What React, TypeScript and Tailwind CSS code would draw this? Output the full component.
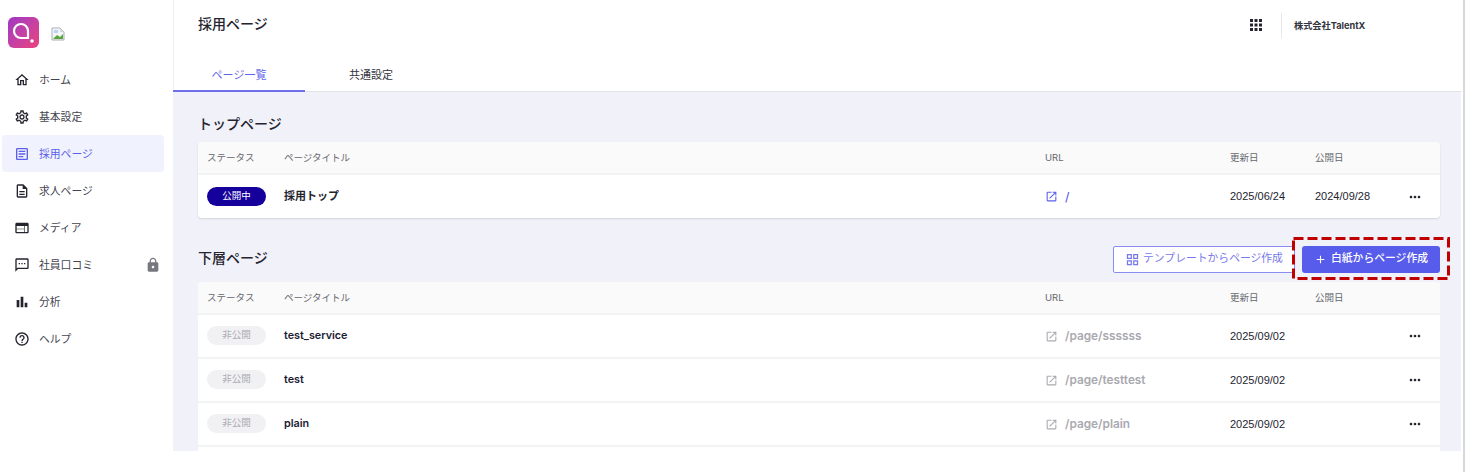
import type { ReactNode } from 'react'
import {
  MdAdd,
  MdApps,
  MdBarChart,
  MdHelpOutline,
  MdLock,
  MdMoreHoriz,
  MdOpenInNew,
  MdOutlineArticle,
  MdOutlineDescription,
  MdOutlineGridView,
  MdOutlineHome,
  MdOutlineSettings,
  MdOutlineSms,
  MdWeb,
} from 'react-icons/md'

const navItems = [
  { label: 'ホーム', icon: <MdOutlineHome size={16} /> },
  { label: '基本設定', icon: <MdOutlineSettings size={16} /> },
  { label: '採用ページ', icon: <MdOutlineArticle size={16} />, active: true },
  { label: '求人ページ', icon: <MdOutlineDescription size={16} /> },
  { label: 'メディア', icon: <MdWeb size={16} /> },
  { label: '社員口コミ', icon: <MdOutlineSms size={16} />, locked: true },
  { label: '分析', icon: <MdBarChart size={16} /> },
  { label: 'ヘルプ', icon: <MdHelpOutline size={16} /> },
]

const drafts = [
  { title: 'test_service', url: '/page/ssssss', updated: '2025/09/02' },
  { title: 'test', url: '/page/testtest', updated: '2025/09/02' },
  { title: 'plain', url: '/page/plain', updated: '2025/09/02' },
]

const dateFont = "font-['Liberation_Sans',sans-serif]"

function Logo() {
  return (
    <div className="w-[31px] h-[31px] rounded-[6px] bg-gradient-to-br from-[#a034c4] to-[#ec3f7c] flex items-center justify-center">
      <svg width="31" height="31" viewBox="0 0 31 31" fill="none">
        <path d="M13 7a7 7 0 0 0 0 14h7v-7a7 7 0 0 0-7-7z" stroke="white" strokeWidth="2.2" />
        <circle cx="24" cy="24" r="1.8" fill="white" />
      </svg>
    </div>
  )
}

function BrokenImage() {
  return (
    <svg width="14" height="14" viewBox="0 0 14 14">
      <path d="M1 1h8l4 4v8H1z" fill="#f4f6f8" stroke="#a9aeb3" />
      <path d="M9 1v4h4z" fill="#d5d8dc" />
      <path d="M2 12l4-4 3 2 3-3v5H2z" fill="#5aa53c" />
      <path d="M3 3h4v3H3z" fill="#b9d3f0" />
    </svg>
  )
}

function Sidebar() {
  return (
    <aside className="w-[173px] shrink-0 bg-white h-[451px]">
      <div className="flex items-start h-[61px] pl-[8px] pt-[17px]">
        <Logo />
        <div className="ml-[12px] mt-[10px]">
          <BrokenImage />
        </div>
      </div>
      <nav className="pl-[2px] pr-[9px] flex flex-col">
        {navItems.map((item) => (
          <div
            key={item.label}
            className={`h-[37px] rounded-[4px] flex items-center pl-[12px] pr-[3px] ${
              item.active ? 'bg-[#f0f2fe] text-[#5b5fe9]' : 'text-[#44444f]'
            }`}
          >
            <span className={`flex ${item.active ? 'text-[#5b5fe9]' : 'text-[#24242f]'}`}>{item.icon}</span>
            <span className="ml-[9px] pt-[3px] text-[10.8px] flex-1">{item.label}</span>
            {item.locked && <MdLock size={16} className="text-[#77777f]" />}
          </div>
        ))}
      </nav>
    </aside>
  )
}

function Row({ children, className }: { children: ReactNode; className?: string }) {
  return (
    <div className={`grid grid-cols-[77px_761px_185px_85px_85px_1fr] items-center px-[9px] ${className ?? ''}`}>
      {children}
    </div>
  )
}

function HeadRow() {
  return (
    <Row className="h-[33px] pt-[1px] bg-[#fafafa] border-b-2 border-[#f3f3f5] text-[9.5px] text-[#66666e] rounded-t-[4px]">
      <span>ステータス</span>
      <span>ページタイトル</span>
      <span>URL</span>
      <span>更新日</span>
      <span>公開日</span>
    </Row>
  )
}

function Dots() {
  return (
    <div className="flex justify-center pr-[1px] text-[#24242f]">
      <MdMoreHoriz size={16} />
    </div>
  )
}

function Header() {
  return (
    <header className="bg-white h-[92px] border-b border-[#e2e3e8]">
      <div className="flex h-[60px]">
        <h1 className="pl-[25px] pt-[14px] text-[14px] leading-[20px] font-medium text-[#24242f] flex-1">採用ページ</h1>
        <div className="flex items-start pt-[13px] pr-[96px]">
          <MdApps size={18} className="text-[#24242f] mt-[3px] mr-[16px]" />
          <div className="h-[25px] border-l border-[#e8e8ec] pl-[12px] text-[9.2px] font-bold leading-[25px] text-[#33333d] w-[84px] whitespace-nowrap">
            株式会社TalentX
          </div>
        </div>
      </div>
      <div className="flex h-[32px] text-[11px]">
        <div className="w-[132px] border-b-2 border-[#6f70ee] text-[#6366ea] flex items-center justify-center h-[32px]">
          ページ一覧
        </div>
        <div className="w-[132px] text-[#33333d] flex items-center justify-center h-[31px]">共通設定</div>
      </div>
    </header>
  )
}

export default function App() {
  return (
    <div
      className="relative w-[1466px] h-[472px] bg-white flex overflow-hidden"
      style={{ fontFamily: 'Inter, "Noto Sans CJK JP", sans-serif' }}
    >
      <Sidebar />
      <main className="w-[1288px] h-[451px] bg-[#f0f1f9] overflow-hidden">
        <Header />
        <div className="pl-[25px] pr-[21px]">
          <h2 className="mt-[22px] h-[19px] leading-[19px] text-[14px] font-medium text-[#24242f]">トップページ</h2>
          <section className="mt-[9px] bg-white rounded-[4px] shadow-[0_1px_2px_rgba(0,0,0,0.12)]">
            <HeadRow />
            <Row className="h-[43px] text-[11px] text-[#24242f]">
              <span className="w-[59px] h-[19px] -mt-[1px] rounded-full bg-[#15009c] text-white text-[9.5px] flex items-center justify-center">
                公開中
              </span>
              <span className="font-bold">採用トップ</span>
              <span className="flex items-center text-[#5b5fe9] text-[12px] font-medium">
                <MdOpenInNew size={13} />
                <span className="ml-[7px]">/</span>
              </span>
              <span className={dateFont}>2025/06/24</span>
              <span className={dateFont}>2024/09/28</span>
              <Dots />
            </Row>
          </section>

          <div className="mt-[28px] h-[27px] flex items-center">
            <h2 className="text-[14px] font-medium text-[#24242f] flex-1 -mt-[4px]">下層ページ</h2>
            <button className="h-[27px] w-[182px] border border-[#8a8cf0] rounded-[2px] bg-white text-[#7678ea] text-[10.8px] flex items-center justify-center">
              <MdOutlineGridView size={15} />
              <span className="ml-[3px]">テンプレートからページ作成</span>
            </button>
            <button className="ml-[7px] h-[27px] w-[138px] rounded-[3px] bg-[#585ceb] text-white text-[10.8px] font-medium flex items-center justify-center">
              <MdAdd size={13} />
              <span className="ml-[4px]">白紙からページ作成</span>
            </button>
          </div>

          <section className="mt-[9px] bg-white rounded-t-[4px] h-[180px]">
            <HeadRow />
            {drafts.map((d) => (
              <Row key={d.title} className="h-[44px] border-b-2 border-[#f3f3f5] text-[11px] text-[#24242f]">
                <span className="w-[59px] h-[19px] -mt-[1px] rounded-full bg-[#f1f1f3] text-[#aaaab0] text-[9.5px] flex items-center justify-center">
                  非公開
                </span>
                <span className="pt-[1px] font-semibold text-[10.8px] text-[#1b1b33]">{d.title}</span>
                <span className="flex items-center text-[#a9a9b0] text-[11.8px] font-semibold">
                  <MdOpenInNew size={13} />
                  <span className="ml-[7px] pt-[1px]">{d.url}</span>
                </span>
                <span className={dateFont}>{d.updated}</span>
                <span />
                <Dots />
              </Row>
            ))}
          </section>
        </div>
      </main>
      <div className="absolute left-[1463px] top-0 w-[2px] h-[472px] bg-[#d8d8d8]" />
      <div className="absolute left-[173px] top-0 w-[1px] h-[89px] bg-[#eeeef4]" />
      <svg className="absolute left-[1292px] top-[237px]" width="158" height="43" fill="none">
        <rect x="1.5" y="1.5" width="155" height="40" stroke="#c00000" strokeWidth="3" strokeDasharray="10 4" />
      </svg>
    </div>
  )
}
